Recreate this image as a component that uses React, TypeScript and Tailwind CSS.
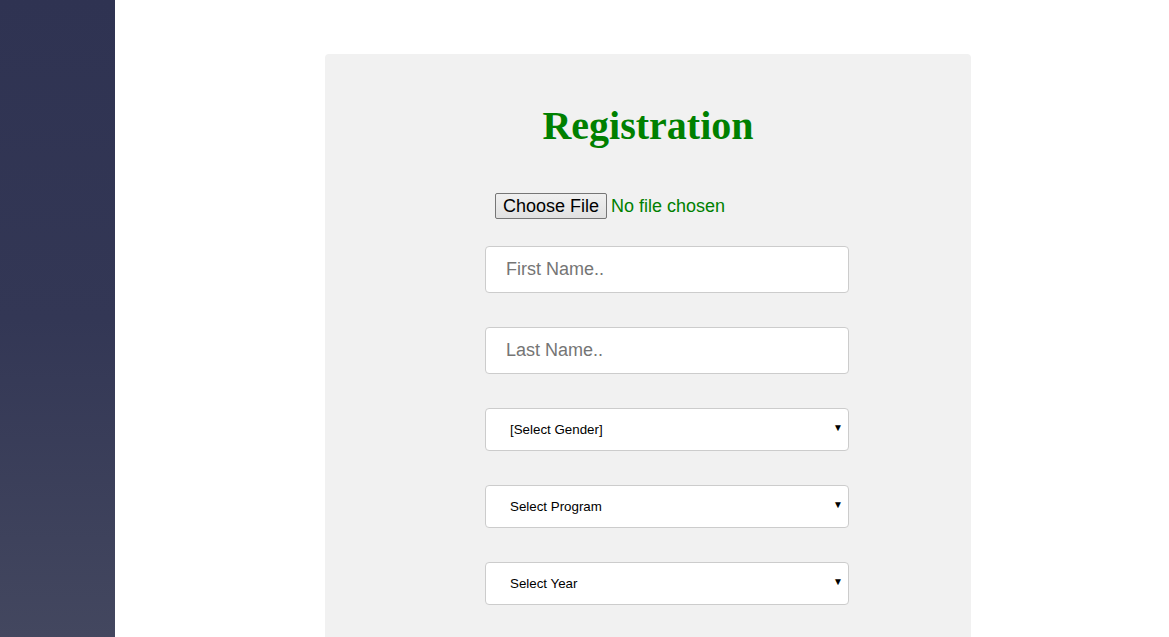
import React from "react";

const SelectBox: React.FC<{ label: string }> = ({ label }) => (
  <div className="relative w-[364px] h-[43px] bg-white border border-[#cccccc] rounded-[4px] flex items-center">
    <span className="pl-[24px] text-[13.333px] text-black">{label}</span>
    <span className="absolute right-[5px] top-[14px] text-[10px] leading-none text-black">▼</span>
  </div>
);

const TextBox: React.FC<{ placeholder: string }> = ({ placeholder }) => (
  <input
    type="text"
    placeholder={placeholder}
    className="w-[364px] h-[47px] bg-white border border-[#cccccc] rounded-[4px] pl-[20px] text-[18px] placeholder:text-[#757575] outline-none"
    style={{ fontFamily: '"Liberation Sans", Arial, sans-serif' }}
  />
);

const App: React.FC = () => {
  return (
    <div className="flex h-[637px] w-full overflow-hidden bg-white" style={{ fontFamily: '"Liberation Sans", Arial, sans-serif' }}>
      <div className="w-[115px] shrink-0 h-full bg-gradient-to-b from-[#2f3352] via-[#333755] to-[#43475f]" />
      <div className="flex-1">
        <div className="ml-[210px] mt-[54px] w-[646px] h-[620px] bg-[#f1f1f1] rounded-t-[4px]">
          <h1
            className="text-center text-[40px] font-bold text-[#008000] pt-[44px] leading-[56px]"
            style={{ fontFamily: '"Liberation Serif", "Times New Roman", serif' }}
          >
            Registration
          </h1>
          <div className="ml-[160px] mt-[39px] flex flex-col">
            <div className="ml-[10px] flex items-center h-[26px]">
              <span className="h-[26px] px-[7px] flex items-center border border-[#767676] rounded-[2px] bg-gradient-to-b from-[#f0f0f0] to-[#e1e1e1] text-[18px] text-black">
                Choose File
              </span>
              <span className="ml-[4px] text-[18px] text-[#008000]">No file chosen</span>
            </div>
            <div className="mt-[27px] flex flex-col gap-[34px]">
              <TextBox placeholder="First Name.." />
              <TextBox placeholder="Last Name.." />
              <SelectBox label="[Select Gender]" />
              <SelectBox label="Select Program" />
              <SelectBox label="Select Year" />
            </div>
          </div>
        </div>
      </div>
    </div>
  );
};

export default App;
